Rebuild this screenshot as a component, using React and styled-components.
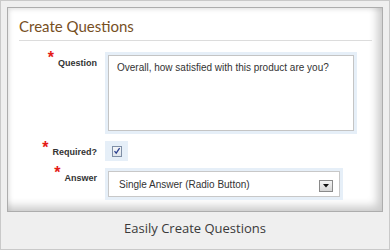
import React from "react";
import styled, { createGlobalStyle } from "styled-components";

const Global = createGlobalStyle`
  html, body { margin: 0; padding: 0; background: #fff; }
  * { box-sizing: border-box; }
`;

const Frame = styled.div`
  width: 390px;
  height: 250px;
  border: 1px solid #c9c9c9;
  background: #efefef;
  display: flex;
  flex-direction: column;
  padding: 6px 6px 0 6px;
`;

const Panel = styled.div`
  height: 205px;
  background: #fff;
  border: 1px solid #adadad;
  box-shadow: inset -5px -5px 8px rgba(0, 0, 0, 0.2), inset 2px 2px 4px rgba(0, 0, 0, 0.08);
  padding: 8px 10px 0 11px;
  display: flex;
  flex-direction: column;
`;

const Title = styled.h1`
  margin: 0;
  font-family: Lato, "Open Sans", sans-serif;
  font-weight: 400;
  font-size: 15px;
  line-height: 20px;
  color: #77501f;
  padding-bottom: 4px;
  border-bottom: 1px solid #dcdcdc;
`;

const Form = styled.div`
  display: grid;
  grid-template-columns: 80px auto;
  justify-content: start;
  align-items: start;
  column-gap: 8px;
  margin-top: 11px;
  margin-left: -2px;
`;

const Label = styled.div`
  display: flex;
  justify-content: flex-end;
  align-items: flex-start;
  padding-top: ${(p) => p.$top}px;
  margin-bottom: ${(p) => p.$gap}px;
`;

const LabelText = styled.span`
  font-family: "Liberation Sans", Arial, sans-serif;
  font-weight: bold;
  font-size: 9px;
  line-height: 12px;
  color: #333;
  white-space: nowrap;
`;

const Star = styled.span`
  color: #e41b17;
  font-family: "Liberation Sans", Arial, sans-serif;
  font-size: 16px;
  font-weight: bold;
  line-height: 12px;
  height: 12px;
  margin-top: -${(p) => p.$raise}px;
  margin-right: 4px;
`;

const Field = styled.div`
  margin-bottom: ${(p) => p.$gap}px;
  width: ${(p) => p.$w}px;
  background: #e6eff8;
  padding: 3px;
`;

const TextBox = styled.div`
  height: 76px;
  background: #fff;
  border: 1px solid #c4c4c4;
  padding: 6px 8px;
  font-family: "Liberation Sans", Arial, sans-serif;
  font-size: 10px;
  line-height: 12px;
  color: #333;
`;

const CheckWrap = styled.div`
  width: 23px;
  height: 20px;
  background: #e6eff8;
  display: flex;
  align-items: center;
  justify-content: center;
  margin-bottom: ${(p) => p.$gap}px;
`;

const Check = styled.div`
  width: 10px;
  height: 11px;
  border: 1px solid #7f8fa6;
  background: linear-gradient(#f4f6f9, #dfe5ec);
  display: flex;
  align-items: center;
  justify-content: center;
`;

const SelectBox = styled.div`
  height: 26px;
  background: #fff;
  border: 1px solid #c8c8c8;
  display: flex;
  align-items: center;
  justify-content: space-between;
  padding: 0 6px 0 10px;
  font-family: "Liberation Sans", Arial, sans-serif;
  font-size: 10px;
  color: #333;
`;

const DropBtn = styled.div`
  width: 14px;
  height: 12px;
  margin-top: 3px;
  border: 1px solid #8a8a8a;
  background: linear-gradient(#f4f4f4, #d6d6d6);
  display: flex;
  align-items: center;
  justify-content: center;
`;

const Caption = styled.div`
  flex: 1;
  display: flex;
  align-items: center;
  justify-content: center;
  font-family: "Open Sans", sans-serif;
  font-size: 13px;
  color: #3a3a3a;
  padding-bottom: 5px;
`;

export default function App() {
  return (
    <>
      <Global />
      <Frame>
        <Panel>
          <Title>Create Questions</Title>
          <Form>
            <Label $top={5} $gap={7}>
              <Star $raise={5}>*</Star>
              <LabelText>Question</LabelText>
            </Label>
            <Field $w={252} $gap={7}>
              <TextBox>Overall, how satisfied with this product are you?</TextBox>
            </Field>

            <Label $top={5} $gap={7}>
              <Star $raise={4}>*</Star>
              <LabelText>Required?</LabelText>
            </Label>
            <CheckWrap $gap={7}>
              <Check>
                <svg width="8" height="8" viewBox="0 0 8 8">
                  <path d="M1.5 4.2 L3.2 6.2 L6.6 1.2" fill="none" stroke="#2a3f8f" strokeWidth="1.3" />
                </svg>
              </Check>
            </CheckWrap>

            <Label $top={4} $gap={0}>
              <Star $raise={5}>*</Star>
              <LabelText>Answer</LabelText>
            </Label>
            <Field $w={238} $gap={0}>
              <SelectBox>
                Single Answer (Radio Button)
                <DropBtn>
                  <svg width="6" height="4" viewBox="0 0 6 4">
                    <path d="M0 0 L6 0 L3 3.5 Z" fill="#111" />
                  </svg>
                </DropBtn>
              </SelectBox>
            </Field>
          </Form>
        </Panel>
        <Caption>Easily Create Questions</Caption>
      </Frame>
    </>
  );
}
